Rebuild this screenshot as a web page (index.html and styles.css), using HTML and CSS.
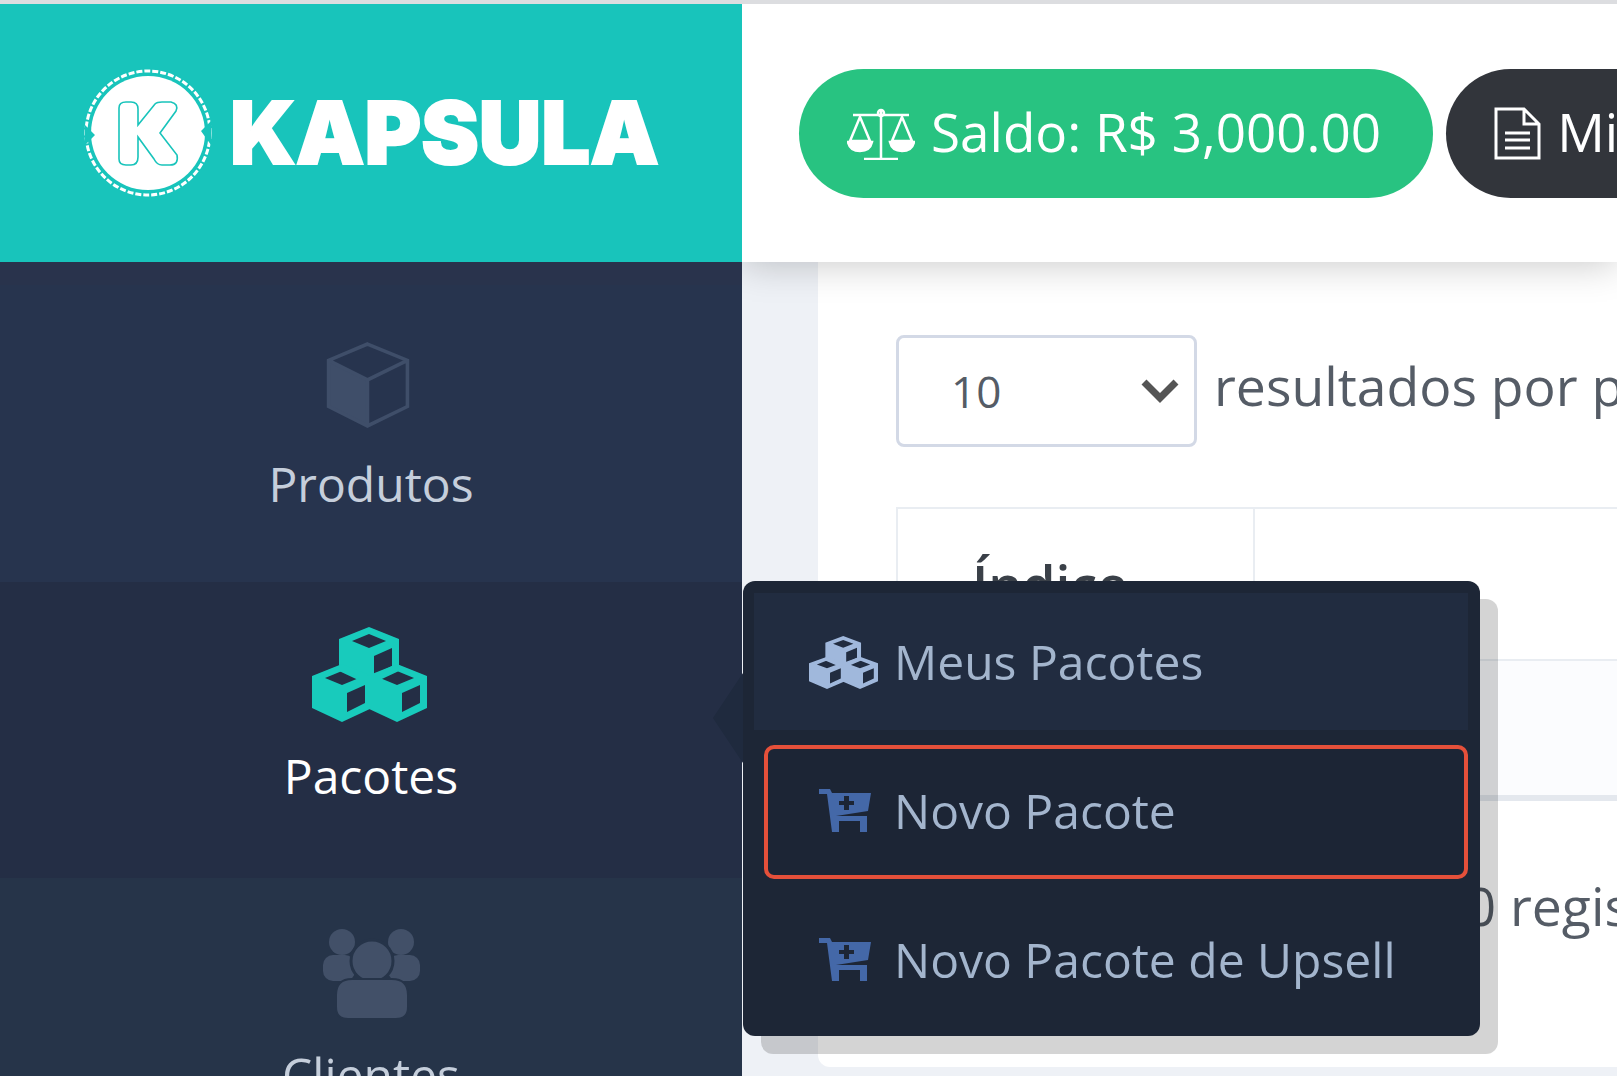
FILE: index.html
```html
<!DOCTYPE html>
<html lang="pt-BR">
<head>
<meta charset="UTF-8">
<title>Kapsula</title>
<link rel="stylesheet" href="styles.css">
</head>
<body>
    <svg class="sprites" width="0" height="0">
        <symbol id="cube" viewBox="0 0 60 58">
            <path fill-rule="evenodd" d="M30 0 L60 12 V44 L30 58 L0 44 V12 Z M30 7 L13 14 L30 21 L47 14 Z M35 29 V48 L53 39 V21 Z"/>
        </symbol>
        <symbol id="cubes" viewBox="0 0 115 95" preserveAspectRatio="none">
            <use href="#cube" x="27" y="0" width="60" height="58"/>
            <use href="#cube" x="0" y="37" width="60" height="58"/>
            <use href="#cube" x="55" y="37" width="60" height="58"/>
        </symbol>
        <symbol id="cart" viewBox="0 0 52 43">
            <path fill-rule="evenodd" d="M0 0 H11 L13 4 H52 L49 22 L17 27 L18 27 H48 V43 H41 V32 H20 V43 H13 L8 5 H0 Z M25 7 V12 H20 V16 H25 V21 H30 V16 H35 V12 H30 V7 Z"/>
        </symbol>
    </svg>

    <div class="app">
        <aside class="sidebar">
            <div class="brand">
                <svg class="brand-mark" viewBox="0 0 128 128">
                    <circle cx="64" cy="64" r="62" fill="none" stroke="#fff" stroke-width="3" stroke-dasharray="6 2"/>
                    <circle cx="64" cy="64" r="57" fill="#fff"/>
                    <path d="M1 56 L11 66 L1 76 Z M127 52 L117 62 L127 76 Z" fill="#18c4bb"/>
                    <path d="M35 39 Q35 33 42 33 H47 Q54 33 54 40 V56 L71 35 Q73 33 78 33 H87 Q95 35 92 42 L76 64 L93 86 Q95 96 86 96 H78 Q73 96 70 90 L54 68 V88 Q54 96 47 96 H42 Q35 96 35 90 Z" fill="none" stroke="#18c4bb" stroke-width="1.6"/>
                </svg>
                <span class="brand-name">KAPSULA</span>
            </div>
            <nav class="nav">
                <a class="nav-item nav-produtos">
                    <svg class="nav-icon" width="86" height="86" viewBox="0 0 83 84">
                        <path d="M3 19 L41 37 V81 L3 63 Z" fill="#3f4e69"/>
                        <path d="M41 2 L80 18 V63 L41 82 L3 63 V18 Z M3 18 L41 37 L80 18 M41 37 V82" fill="none" stroke="#3f4e69" stroke-width="3.5"/>
                    </svg>
                    <span>Produtos</span>
                </a>
                <a class="nav-item nav-pacotes active">
                    <svg class="nav-icon" width="115" height="95"><use href="#cubes"/></svg>
                    <span>Pacotes</span>
                    <div class="flyout">
                        <div class="flyout-item current">
                            <span class="flyout-icon"><svg class="icon-cubes" width="69" height="53"><use href="#cubes"/></svg></span>
                            Meus Pacotes
                        </div>
                        <div class="flyout-item sub focused">
                            <span class="flyout-icon"><svg class="icon-cart" width="52" height="43"><use href="#cart"/></svg></span>
                            Novo Pacote
                        </div>
                        <div class="flyout-item sub">
                            <span class="flyout-icon"><svg class="icon-cart" width="52" height="43"><use href="#cart"/></svg></span>
                            Novo Pacote de Upsell
                        </div>
                    </div>
                </a>
                <a class="nav-item nav-clientes">
                    <svg class="nav-icon" width="99" height="90" viewBox="0 0 99 90">
                        <circle cx="20" cy="13" r="13" fill="#425068"/>
                        <circle cx="79" cy="13" r="13" fill="#425068"/>
                        <rect x="1" y="26" width="32" height="26" rx="10" fill="#425068"/>
                        <rect x="66" y="26" width="32" height="26" rx="10" fill="#425068"/>
                        <circle cx="50" cy="32" r="21" fill="#425068" stroke="#263449" stroke-width="3"/>
                        <path d="M14 78 V66 Q14 50 30 50 H70 Q86 50 86 66 V78 Q86 90 74 90 H26 Q14 90 14 78 Z" fill="#425068" stroke="#263449" stroke-width="2"/>
                    </svg>
                    <span>Clientes</span>
                </a>
            </nav>
        </aside>

        <div class="main">
            <header class="topbar">
                <div class="pill pill-green">
                    <svg width="68" height="53" viewBox="0 0 68 53" fill="none" stroke="#fff" stroke-width="2.5">
                        <path d="M34 3 V51 M17 52 H51 M6 8 H62"/>
                        <circle cx="34" cy="6" r="3"/>
                        <path d="M13 10 L3 34 H23 Z M55 10 L45 34 H65 Z"/>
                        <path d="M1 35 H25 Q23 44 13 44 Q3 44 1 35 Z M43 35 H67 Q65 44 55 44 Q45 44 43 35 Z" fill="#fff"/>
                    </svg>
                    <span class="pill-text">Saldo: R$ 3,000.00</span>
                </div>
                <div class="pill pill-dark">
                    <svg width="47" height="53" viewBox="0 0 47 53" fill="none" stroke="#fff" stroke-width="3">
                        <path d="M2 2 H30 L45 17 V51 H2 Z M30 2 V17 H45"/>
                        <path d="M11 26 H36 M11 33 H36 M11 41 H36"/>
                    </svg>
                    <span class="pill-text">Minhas Faturas</span>
                </div>
            </header>

            <div class="content">
                <div class="card">
                    <div class="length-row">
                        <div class="select-box">
                            10
                            <svg width="38" height="24" viewBox="0 0 38 24" fill="none" stroke="#555" stroke-width="7"><path d="M3 3 L19 19 L35 3"/></svg>
                        </div>
                        <span class="length-label">resultados por página</span>
                    </div>
                    <table class="results">
                        <thead>
                            <tr><th class="col-index">Índice</th><th></th></tr>
                        </thead>
                        <tbody>
                            <tr><td></td><td></td></tr>
                        </tbody>
                    </table>
                    <div class="table-info">Mostrando 0 até 0 de 0 registros</div>
                </div>
            </div>
        </div>
    </div>
</body>
</html>
```
FILE: styles.css
```css
:root {
    --teal: #18c4bb;
    --nav-bg: #263449;
    --nav-active: #242e45;
    --flyout-bg: #1d2636;
    --page-bg: #eef1f6;
    --text-color: #555c66;
}

* {
    box-sizing: border-box;
}

html, body {
    height: 100%;
}

body {
    margin: 0;
    overflow: hidden;
    font-family: "Open Sans", "Noto Sans", sans-serif;
    background-color: var(--page-bg);
    color: var(--text-color);
}

.sprites {
    position: absolute;
}

.app {
    display: flex;
    height: 100%;
    border-top: 4px solid #dcdde0;
    filter: blur(0.5px);
}

/* sidebar */
.sidebar {
    position: relative;
    z-index: 3;
    flex: 0 0 742px;
    display: flex;
    flex-direction: column;
    background-color: var(--nav-bg);
}

.brand {
    flex: 0 0 258px;
    display: flex;
    align-items: center;
    gap: 18px;
    padding: 0 0 0 84px;
    background-color: var(--teal);
}

.brand-mark {
    width: 128px;
    height: 128px;
}

.brand-name {
    font-family: Inter, "Liberation Sans", sans-serif;
    font-weight: 900;
    font-size: 86.5px;
    line-height: 1;
    color: #fff;
    -webkit-text-stroke: 2px #fff;
}

.nav {
    flex: 1;
    padding-top: 23px;
    background-color: #29334c;
}

.nav-item {
    position: relative;
    display: flex;
    flex-direction: column;
    align-items: center;
    font-size: 48px;
    line-height: 60px;
    color: #c5cedb;
    background-color: #27344e;
}

.nav-produtos {
    height: 297px;
    padding-top: 57px;
    gap: 26px;
}

.nav-produtos .nav-icon {
    margin-left: -6px;
}

.nav-pacotes {
    height: 296px;
    padding-top: 45px;
    gap: 24px;
    color: #fff;
    background-color: var(--nav-active);
}

.nav-pacotes .nav-icon {
    margin-left: -3px;
    fill: #18cbbc;
}

.nav-clientes {
    padding-top: 51px;
    gap: 26px;
    background-color: var(--nav-bg);
}

/* submenu */
.flyout {
    position: absolute;
    top: -1px;
    left: calc(100% + 1px);
    width: 737px;
    height: 455px;
    padding: 12px 12px 0 11px;
    display: flex;
    flex-direction: column;
    gap: 15px;
    border-radius: 12px;
    background-color: var(--flyout-bg);
    box-shadow: 18px 18px 0 rgba(0,0,0,0.17);
    font-size: 48px;
    color: #a3b5cd;
}

.flyout::before {
    content: "";
    position: absolute;
    top: 92px;
    left: -30px;
    width: 30px;
    height: 90px;
    background-color: #1f2a3e;
    clip-path: polygon(100% 0, 0 50%, 100% 100%);
}

.flyout-item {
    flex: none;
    display: flex;
    align-items: center;
    gap: 13px;
    padding-bottom: 3px;
    white-space: nowrap;
}

.flyout-item.current {
    height: 137px;
    gap: 15px;
    padding-top: 1px;
    padding-bottom: 0;
    padding-left: 53px;
    background-color: #212c40;
}

.flyout-item.sub {
    height: 134px;
    margin-left: 10px;
    padding-left: 41px;
    border: 4px solid transparent;
    border-radius: 10px;
}

.flyout-item.focused {
    border-color: #e5503a;
    background-color: #1c2535;
}

.flyout-icon {
    flex: 0 0 72px;
    display: flex;
    justify-content: center;
}

.icon-cubes {
    fill: #a0b8dc;
}

.icon-cart {
    fill: #4468a8;
}

/* main column */
.main {
    flex: 1;
    min-width: 0;
    display: flex;
    flex-direction: column;
    overflow: hidden;
}

.topbar {
    position: relative;
    z-index: 2;
    flex: 0 0 258px;
    display: flex;
    align-items: center;
    gap: 13px;
    padding-left: 57px;
    background-color: #fff;
    box-shadow: 0 2px 36px rgba(0,0,0,0.22);
    white-space: nowrap;
}

.pill {
    flex: none;
    display: flex;
    align-items: center;
    gap: 16px;
    height: 129px;
    padding: 0 52px 0 48px;
    border-radius: 65px;
    font-size: 53px;
    color: #fff;
}

.pill-text {
    margin-top: -4px;
}

.pill-green {
    background-color: #28c381;
}

.pill-dark {
    background-color: #32353b;
}

.content {
    flex: 1;
    min-height: 0;
    padding: 0 0 9px 76px;
}

.card {
    height: 100%;
    padding: 73px 0 0 78px;
    border-radius: 0 0 0 12px;
    background-color: #fff;
    overflow: hidden;
}

.length-row {
    display: flex;
    align-items: flex-start;
    gap: 17px;
    white-space: nowrap;
}

.select-box {
    flex: 0 0 301px;
    height: 112px;
    display: flex;
    align-items: center;
    justify-content: space-between;
    padding: 0 15px 0 52px;
    border: 3px solid #d3d9e6;
    border-radius: 8px;
    font-size: 44px;
}

.length-label {
    font-size: 53.5px;
    line-height: 102px;
}

.results {
    width: 1000px;
    margin-top: 60px;
    border-collapse: collapse;
}

.results th {
    height: 152px;
    padding: 42px 0 0 74px;
    border: 2px solid #e9edf2;
    border-right: 0;
    vertical-align: top;
    text-align: left;
    font-size: 53.5px;
    font-weight: 600;
    line-height: 68px;
    color: #3a4048;
}

.results .col-index {
    width: 357px;
    border-right: 2px solid #e9edf2;
}

.results td {
    height: 138px;
    background-color: #fbfcfe;
    border-bottom: 6px solid #e4e8ee;
}

.table-info {
    margin-top: 71px;
    margin-left: 23px;
    font-size: 53.5px;
    line-height: 68px;
    white-space: nowrap;
}
```
